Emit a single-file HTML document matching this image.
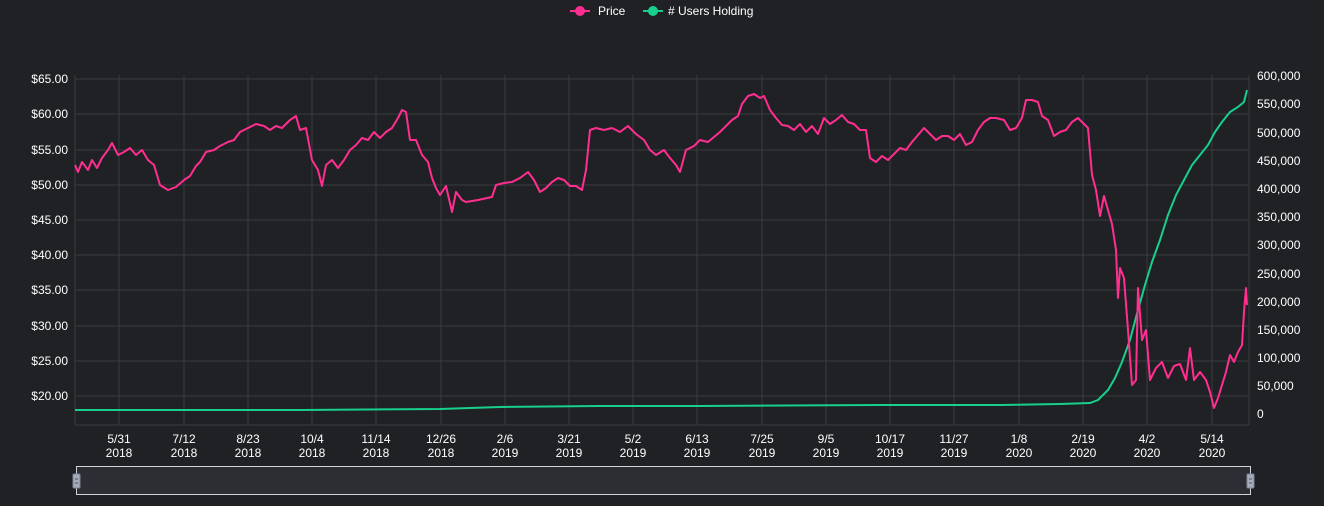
<!DOCTYPE html>
<html><head><style>
body{margin:0;background:#1f2125;width:1324px;height:501px;overflow:hidden;font-family:"Liberation Sans",Arial,sans-serif;}
svg text{font-family:"Liberation Sans",Arial,sans-serif;fill:#fff;font-size:12px}
</style></head><body>
<svg width="1324" height="501" viewBox="0 0 1324 501">
<g stroke="#3a3c40" stroke-width="1">
<line x1="75" y1="79" x2="1249" y2="79"/><line x1="75" y1="114" x2="1249" y2="114"/><line x1="75" y1="150" x2="1249" y2="150"/><line x1="75" y1="185" x2="1249" y2="185"/><line x1="75" y1="220" x2="1249" y2="220"/><line x1="75" y1="255" x2="1249" y2="255"/><line x1="75" y1="290" x2="1249" y2="290"/><line x1="75" y1="326" x2="1249" y2="326"/><line x1="75" y1="361" x2="1249" y2="361"/><line x1="75" y1="396" x2="1249" y2="396"/>
<line x1="119" y1="75" x2="119" y2="425"/><line x1="184" y1="75" x2="184" y2="425"/><line x1="248" y1="75" x2="248" y2="425"/><line x1="312" y1="75" x2="312" y2="425"/><line x1="376" y1="75" x2="376" y2="425"/><line x1="441" y1="75" x2="441" y2="425"/><line x1="505" y1="75" x2="505" y2="425"/><line x1="569" y1="75" x2="569" y2="425"/><line x1="633" y1="75" x2="633" y2="425"/><line x1="697" y1="75" x2="697" y2="425"/><line x1="762" y1="75" x2="762" y2="425"/><line x1="826" y1="75" x2="826" y2="425"/><line x1="890" y1="75" x2="890" y2="425"/><line x1="954" y1="75" x2="954" y2="425"/><line x1="1019" y1="75" x2="1019" y2="425"/><line x1="1083" y1="75" x2="1083" y2="425"/><line x1="1147" y1="75" x2="1147" y2="425"/><line x1="1212" y1="75" x2="1212" y2="425"/>
<line x1="75" y1="75" x2="75" y2="425"/><line x1="75" y1="425" x2="1249" y2="425"/><line x1="1249" y1="75" x2="1249" y2="425"/>
</g>
<g text-anchor="end">
<text x="68" y="83">$65.00</text><text x="68" y="118">$60.00</text><text x="68" y="154">$55.00</text><text x="68" y="189">$50.00</text><text x="68" y="224">$45.00</text><text x="68" y="259">$40.00</text><text x="68" y="294">$35.00</text><text x="68" y="330">$30.00</text><text x="68" y="365">$25.00</text><text x="68" y="400">$20.00</text>
</g>
<g>
<text x="1257" y="80">600,000</text><text x="1257" y="108">550,000</text><text x="1257" y="137">500,000</text><text x="1257" y="165">450,000</text><text x="1257" y="193">400,000</text><text x="1257" y="221">350,000</text><text x="1257" y="249">300,000</text><text x="1257" y="278">250,000</text><text x="1257" y="306">200,000</text><text x="1257" y="334">150,000</text><text x="1257" y="362">100,000</text><text x="1257" y="390">50,000</text><text x="1257" y="418">0</text>
</g>
<g text-anchor="middle">
<text x="119" y="443">5/31</text><text x="119" y="457">2018</text>
<text x="184" y="443">7/12</text><text x="184" y="457">2018</text>
<text x="248" y="443">8/23</text><text x="248" y="457">2018</text>
<text x="312" y="443">10/4</text><text x="312" y="457">2018</text>
<text x="376" y="443">11/14</text><text x="376" y="457">2018</text>
<text x="441" y="443">12/26</text><text x="441" y="457">2018</text>
<text x="505" y="443">2/6</text><text x="505" y="457">2019</text>
<text x="569" y="443">3/21</text><text x="569" y="457">2019</text>
<text x="633" y="443">5/2</text><text x="633" y="457">2019</text>
<text x="697" y="443">6/13</text><text x="697" y="457">2019</text>
<text x="762" y="443">7/25</text><text x="762" y="457">2019</text>
<text x="826" y="443">9/5</text><text x="826" y="457">2019</text>
<text x="890" y="443">10/17</text><text x="890" y="457">2019</text>
<text x="954" y="443">11/27</text><text x="954" y="457">2019</text>
<text x="1019" y="443">1/8</text><text x="1019" y="457">2020</text>
<text x="1083" y="443">2/19</text><text x="1083" y="457">2020</text>
<text x="1147" y="443">4/2</text><text x="1147" y="457">2020</text>
<text x="1212" y="443">5/14</text><text x="1212" y="457">2020</text>
</g>
<polyline fill="none" stroke="#18d08c" stroke-width="2" points="75,410 300,410 440,409 500,407 600,406 700,406 880,405 1000,405 1060,404 1090,403 1098,400 1108,390 1115,378 1122,362 1130,340 1138,310 1145,285 1152,262 1160,240 1168,215 1176,195 1184,180 1192,165 1200,155 1208,145 1215,132 1222,122 1230,112 1238,107 1244,102 1247,90"/>
<polyline fill="none" stroke="#ff2e8f" stroke-width="2" stroke-linejoin="round" points="75,165 78,172 82,162 88,170 92,160 97,168 102,158 108,150 112,143 118,155 124,152 130,148 136,155 142,150 148,160 154,165 160,185 168,190 176,187 184,180 190,176 196,166 200,162 206,152 214,150 220,146 228,142 234,140 240,132 248,128 256,124 264,126 270,130 276,126 282,128 290,120 296,116 300,130 306,128 312,160 318,170 322,186 326,165 332,160 338,168 344,160 350,150 356,145 362,138 368,140 374,132 380,138 386,132 392,128 398,118 402,110 406,112 410,140 416,140 422,155 428,162 432,178 436,188 440,195 446,186 452,212 456,192 462,200 466,202 478,200 492,197 496,185 504,183 512,182 520,178 528,172 534,180 540,192 546,188 552,182 558,178 564,180 570,186 576,186 582,190 586,170 590,130 596,128 604,130 612,128 620,132 628,126 636,134 644,140 650,150 656,155 664,150 670,158 676,165 680,172 686,150 694,146 700,140 708,142 714,137 720,132 726,126 732,120 738,116 742,104 748,96 754,94 760,98 764,96 770,110 776,118 782,125 788,126 794,130 800,124 806,132 812,126 818,134 824,118 830,124 836,120 842,115 848,122 854,124 860,130 866,130 870,158 876,162 882,156 888,160 894,154 900,148 906,150 912,142 918,135 924,128 930,134 936,140 942,136 948,136 954,140 960,134 966,145 972,142 978,130 984,122 990,118 996,118 1004,120 1010,130 1016,128 1022,118 1026,100 1032,100 1038,102 1042,116 1048,120 1054,136 1060,132 1066,130 1072,122 1078,118 1084,124 1088,128 1092,175 1096,190 1100,216 1104,196 1108,210 1112,224 1116,250 1118,298 1120,268 1124,278 1128,330 1132,385 1136,380 1138,288 1142,340 1146,330 1150,380 1156,368 1162,362 1168,378 1174,366 1180,364 1186,380 1190,348 1194,380 1200,372 1206,380 1210,392 1214,408 1218,398 1222,385 1226,372 1230,355 1234,362 1238,352 1242,345 1244,312 1246,288 1247,305"/>
<rect x="76.5" y="466.5" width="1174" height="28" fill="#2d2e33" stroke="#cfd3da" stroke-width="1"/>
<rect x="73" y="474" width="7" height="14" rx="1" fill="#a5adbd" stroke="#7d8595"/>
<rect x="1247" y="474" width="7" height="14" rx="1" fill="#a5adbd" stroke="#7d8595"/>
<line x1="1249" y1="479" x2="1252" y2="479" stroke="#555"/><line x1="1249" y1="483" x2="1252" y2="483" stroke="#555"/>
<line x1="75" y1="479" x2="78" y2="479" stroke="#555"/><line x1="75" y1="483" x2="78" y2="483" stroke="#555"/>
<line x1="570" y1="11" x2="590" y2="11" stroke="#ff2e8f" stroke-width="2"/><circle cx="580" cy="11" r="5" fill="#ff2e8f"/>
<text x="598" y="15">Price</text>
<line x1="643" y1="11" x2="663" y2="11" stroke="#18d08c" stroke-width="2"/><circle cx="653" cy="11" r="5" fill="#18d08c"/>
<text x="668" y="15"># Users Holding</text>
</svg>
</body></html>
